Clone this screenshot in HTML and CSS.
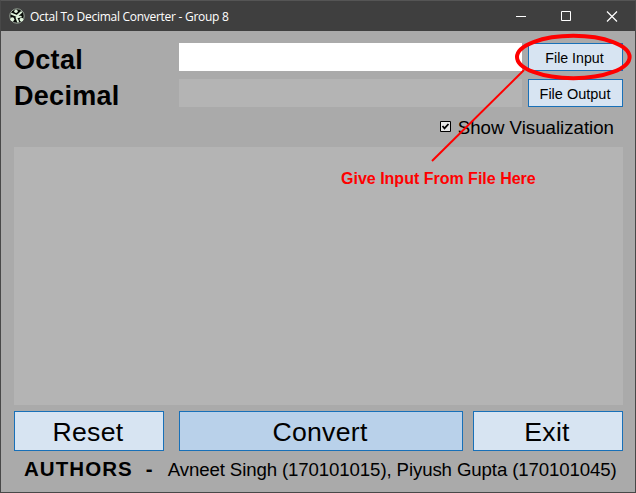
FILE: index.html
```html
<!DOCTYPE html>
<html lang="en">
<head>
<meta charset="utf-8">
<title>Octal To Decimal Converter - Group 8</title>
<link rel="stylesheet" href="styles.css">
</head>
<body>
<div class="window">
  <header class="titlebar">
    <svg class="logo" width="16" height="16" viewBox="0 0 16 16">
      <circle cx="8" cy="8" r="7.2" fill="#080c08" stroke="#9aa59a" stroke-width="1"/>
      <g fill="#dff2dc"><circle cx="7" cy="3.3" r="1.7"/><circle cx="3.3" cy="11.3" r="2"/><circle cx="12.5" cy="11.6" r="1.9"/></g>
      <path d="M2.8 5.8 6.5 7.3 8 8 12.2 4.2M8 8 7.6 10 9 13.6M7.6 9.3 11.8 8.6" fill="none" stroke="#dff2dc" stroke-width="1.9" stroke-linecap="round"/>
    </svg>
    <span class="title">Octal To Decimal Converter - Group 8</span>
    <svg class="controls" width="138" height="29" viewBox="0 0 138 29" fill="none" stroke="#fff">
      <path d="M18 14.5h10M63.5 9.5h9v9h-9z"/><path d="m109 9.5 10 10m0-10-10 10" stroke-width="1.2"/>
    </svg>
  </header>
  <main class="content">
    <div class="row"><label class="name">Octal</label><div class="field input"></div><button class="btn small file-in">File Input</button></div>
    <div class="row"><label class="name">Decimal</label><div class="field"></div><button class="btn small">File Output</button></div>
    <div class="option">
      <svg width="11" height="11" viewBox="0 0 11 11"><path d="M.5.5h10v10H.5z" fill="#e8e8e8" stroke="#000"/><path d="m2.5 5 2 2.3 4-4.3" fill="none" stroke="#000" stroke-width="1.8"/></svg>
      <span>Show Visualization</span>
    </div>
    <div class="canvas"></div>
    <div class="actions"><button class="btn">Reset</button><button class="btn convert">Convert</button><button class="btn">Exit</button></div>
    <footer class="authors"><b>AUTHORS</b><b class="dash">-</b><span class="people">Avneet Singh (170101015), Piyush Gupta (170101045)</span></footer>
  </main>
  <svg class="marker" width="636" height="493" viewBox="0 0 636 493" fill="none" stroke="#f00">
    <ellipse cx="573.3" cy="57" rx="56.3" ry="21.2" stroke-width="4"/>
    <path d="M524 70 432 161" stroke-width="2"/>
  </svg>
  <div class="note">Give Input From File Here</div>
</div>
</body>
</html>
```

FILE: styles.css
```css
* { box-sizing: border-box; }
body { margin: 0; font-family: "Liberation Sans", Arial, sans-serif; color: #000; }
.window { position: relative; width: 636px; height: 493px; background: #aaa; border: 1px solid #484848; border-top-color: #555; overflow: hidden; white-space: nowrap; }
.titlebar { height: 30px; background: #3f3f3f; display: flex; align-items: center; padding-left: 8px; color: #fff; }
.logo { margin-right: 5px; }
.title { font: 12px/28px "Open Sans", "Noto Sans", sans-serif; letter-spacing: -0.28px; padding-top: 1px; }
.controls { margin-left: auto; margin-right: -1px; }
.content { padding: 12px 12px 0 13px; }
.row { display: grid; grid-template-columns: 165px 343px 101px; grid-template-rows: 28px; height: 28px; margin-bottom: 8px; }
.row .btn { margin-left: 6px; width: 95px; }
.name { font-size: 27px; line-height: 34px; font-weight: bold; letter-spacing: 0.3px; }
.field { background: #b4b4b4; }
.input { background: #fff; }
.btn { font-family: inherit; font-size: 26.67px; letter-spacing: 0.25px; color: #000; background: #d7e4f2; border: 1px solid #1870b8; border-radius: 0; padding: 3px 2px 0 0; margin: 0; }
.small { font-size: 14.5px; letter-spacing: 0; padding: 1px 1px 0 0; }
.file-in { padding-right: 2px; font-size: 14.2px; }
.option { height: 32px; display: flex; justify-content: flex-end; align-items: flex-start; gap: 7px; padding-right: 9px; font-size: 18.67px; line-height: 26px; }
.option svg { margin-top: 6px; }
.canvas { height: 258px; background: #b4b4b4; }
.actions { display: flex; height: 40px; margin-top: 6px; }
.actions .btn { width: 150px; }
.actions .convert { width: 284px; margin: 0 10px 0 15px; background: #b9d1ea; }
.authors { display: flex; align-items: baseline; padding: 4px 0 0 10px; line-height: 27px; font-size: 20.5px; }
.authors b { letter-spacing: 1.05px; }
.authors .dash { margin-left: 13px; width: 22px; }
.people { font-size: 18.67px; letter-spacing: -0.12px; }
.marker { position: absolute; left: -1px; top: -1px; pointer-events: none; }
.note { position: absolute; left: 340px; top: 168px; font-size: 16px; line-height: 20px; font-weight: bold; color: #f00; }
```
